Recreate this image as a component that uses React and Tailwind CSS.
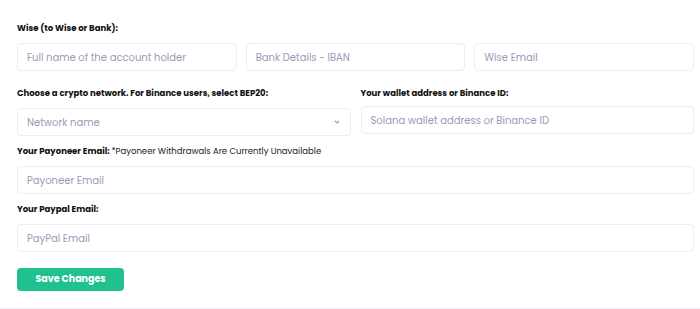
import React from "react";

const font = { fontFamily: "Poppins, 'Open Sans', 'Noto Sans', sans-serif" };

function Field({ placeholder, className = "" }) {
  return (
    <div
      className={`h-[28px] flex items-center px-[9px] border border-[#ececf4] rounded-[4px] bg-white text-[10px] text-[#9a9ab6] ${className}`}
    >
      {placeholder}
    </div>
  );
}

function Label({ children, className = "" }) {
  return (
    <div className={`h-[14px] leading-[14px] text-[8.5px] font-bold text-[#111] ${className}`}>
      {children}
    </div>
  );
}

export default function App() {
  return (
    <div
      className="w-[700px] h-[309px] bg-white pl-[17px] pr-[6px] pt-[21px] border-b border-[#f0f0f6] box-border"
      style={font}
    >
      <Label className="mb-[8px]">Wise (to Wise or Bank):</Label>
      <div className="grid grid-cols-3 gap-[9px]">
        <Field placeholder="Full name of the account holder" />
        <Field placeholder="Bank Details - IBAN" />
        <Field placeholder="Wise Email" />
      </div>

      <div className="grid grid-cols-2 gap-[10px] mt-[15px]">
        <div>
          <Label className="mb-[8px]">Choose a crypto network. For Binance users, select BEP20:</Label>
          <div className="h-[28px] flex items-center justify-between pl-[9px] pr-[9px] border border-[#ececf4] rounded-[4px] bg-white text-[10px] text-[#9a9ab6]">
            <span>Network name</span>
            <svg width="8" height="6" viewBox="0 0 8 6">
              <path d="M1.8 1.8 L4 4 L6.2 1.8" fill="none" stroke="#9a9ab6" strokeWidth="1.1" />
            </svg>
          </div>
        </div>
        <div>
          <Label className="mb-[6px]">Your wallet address or Binance ID:</Label>
          <Field placeholder="Solana wallet address or Binance ID" />
        </div>
      </div>

      <Label className="mt-[8px] mb-[8px]">
        Your Payoneer Email:{" "}
        <span className="font-normal text-[#222]">*Payoneer Withdrawals Are Currently Unavailable</span>
      </Label>
      <Field placeholder="Payoneer Email" />

      <Label className="mt-[8px] mb-[8px]">Your Paypal Email:</Label>
      <Field placeholder="PayPal Email" />

      <button className="mt-[16px] w-[107px] h-[23px] rounded-[4px] bg-[#20c08f] text-white text-[9.5px] font-bold flex items-center justify-center">
        Save Changes
      </button>
    </div>
  );
}
